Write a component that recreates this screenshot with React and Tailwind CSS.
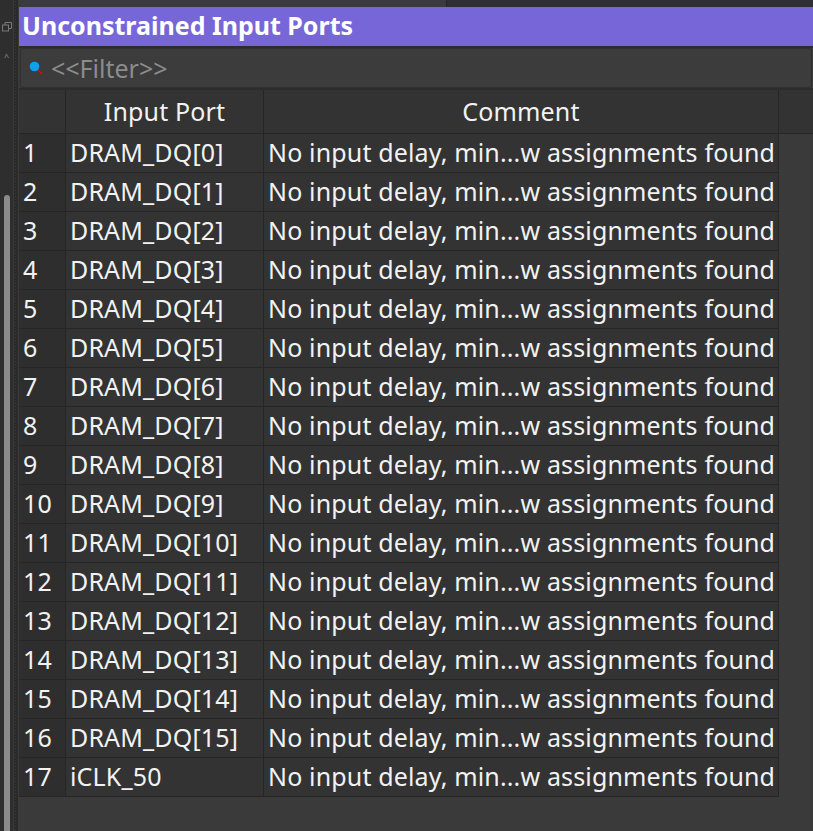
import { useState } from "react";

const ports = [
  "DRAM_DQ[0]", "DRAM_DQ[1]", "DRAM_DQ[2]", "DRAM_DQ[3]", "DRAM_DQ[4]", "DRAM_DQ[5]",
  "DRAM_DQ[6]", "DRAM_DQ[7]", "DRAM_DQ[8]", "DRAM_DQ[9]", "DRAM_DQ[10]", "DRAM_DQ[11]",
  "DRAM_DQ[12]", "DRAM_DQ[13]", "DRAM_DQ[14]", "DRAM_DQ[15]", "iCLK_50",
];

function SearchDot() {
  return (
    <svg width="14" height="14" viewBox="0 0 14 14" className="shrink-0">
      <line x1="8" y1="8" x2="12.5" y2="12.5" stroke="#c01818" strokeWidth="1.6" strokeLinecap="round" />
      <circle cx="5.5" cy="5.5" r="4.8" fill="#10a0f0" />
    </svg>
  );
}

export default function App() {
  let [filter, setFilter] = useState("");

  return (
    <div className="w-[813px] h-[831px] bg-[#3a3a3a] flex overflow-hidden text-[#f2f2f2]" style={{ fontFamily: '"Noto Sans", "Open Sans", sans-serif' }}>

      {/* left gutter with scrollbar */}
      <div className="w-[19px] flex flex-row bg-[#2e2e2e]">
        <div className="w-[13px] flex flex-col items-center pt-[22px]">
          <svg width="10" height="10" viewBox="0 0 10 10" className="opacity-70 shrink-0">
            <rect x="0.5" y="3" width="6" height="6" fill="none" stroke="#9a9a9a" />
            <path d="M3 3V0.5h6.5V6.5H6.5" fill="none" stroke="#9a9a9a" />
          </svg>
          <div className="mt-[20px] text-[9px] text-[#8a8a8a] leading-none">^</div>
          <div className="mt-[134px] w-[6px] flex-1 bg-[#8b8b8b] rounded-t-[3px]" />
        </div>
        <div className="w-[6px] bg-[#2a2a2a] border-x border-[#3a3a3a]" style={{ backgroundImage: "radial-gradient(#3c3c3c 0.6px, transparent 0.6px)", backgroundSize: "3px 3px" }} />
      </div>

      <div className="flex-1 flex flex-col">
        <div className="h-[7px] flex bg-[#2f2f2f]">
          <div className="w-[427px] bg-[#3b3b3b]" />
          <div className="flex-1 border-l border-[#262626]" />
        </div>

        <div className="h-[39px] bg-[#7766d8] flex items-center pl-[3px] pb-[2px] text-white font-bold text-[25px] leading-none">
          Unconstrained Input Ports
        </div>

        <div className="h-[2px] bg-[#2c2c2c]" />
        <div className="h-[40px] mx-[1px] bg-[#3c3c3c] rounded-[3px] border border-[#2f2f2f] flex items-center gap-[8px] pl-[8px]">
          <SearchDot />
          <input
            value={filter}
            onChange={(e) => setFilter(e.target.value)}
            placeholder="<<Filter>>"
            className="bg-transparent outline-none text-[25px] text-[#bdbdbd] placeholder-[#8c8c8c] flex-1 min-w-0 leading-none"
          />
        </div>
        <div className="h-[2px] bg-[#2c2c2c]" />

        <div className="flex flex-col text-[25px] leading-none tracking-[0.15px]">
          <div className="flex h-[44px] bg-[#333333] border-b border-[#262626]">
            <div className="w-[47px] border-r border-[#262626]" />
            <div className="w-[198px] border-r border-[#262626] flex items-center justify-center">Input Port</div>
            <div className="w-[515px] border-r border-[#262626] flex items-center justify-center">Comment</div>
            <div className="flex-1" />
          </div>
          {ports.map((p, i) => (
            <div key={p} className="flex h-[39px]">
              <div className="w-[47px] bg-[#2e2e2e] border-r border-b border-[#262626] flex items-center pl-[4px] pb-[1px]">{i + 1}</div>
              <div className="w-[198px] bg-[#333333] border-r border-b border-[#262626] flex items-center pl-[4px] pb-[1px]">{p}</div>
              <div className="w-[515px] bg-[#333333] border-r border-b border-[#262626] flex items-center pl-[4px] pb-[1px] whitespace-nowrap overflow-hidden">No input delay, min...w assignments found</div>
              <div className="flex-1" />
            </div>
          ))}
        </div>
      </div>
    </div>
  );
}
